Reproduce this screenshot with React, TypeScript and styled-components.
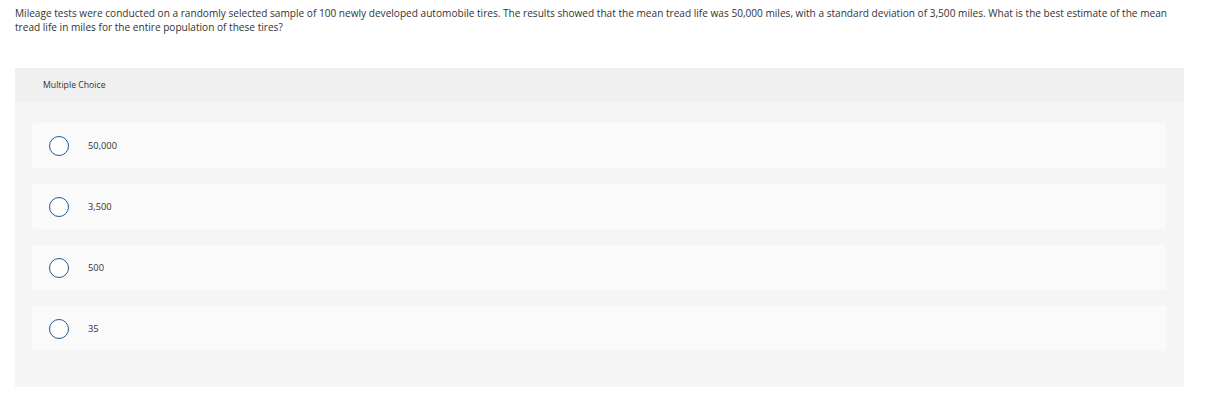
import React from "react";
import styled, { createGlobalStyle } from "styled-components";

const Global = createGlobalStyle`
  html, body { margin: 0; padding: 0; background: #fff; }
  body { font-family: "Open Sans", Lato, Arial, sans-serif; color: #333; }
`;

const Page = styled.div`
  padding: 6px 33px 20px 15px;
`;

const Question = styled.p`
  margin: 0;
  font-size: 10.1px;
  line-height: 14px;
  color: #333;
  max-width: 1160px;
`;

const Panel = styled.section`
  margin-top: 34px;
  background: #f5f5f5;
`;

const PanelHeader = styled.div`
  height: 34px;
  background: #f0f0f0;
  display: flex;
  align-items: center;
  padding-left: 28px;
  font-size: 8.7px;
  color: #333;
`;

const Options = styled.div`
  display: flex;
  flex-direction: column;
  gap: 16px;
  padding: 21px 18px 36px 17px;
`;

const Option = styled.label`
  height: 45px;
  background: #fafafa;
  border-radius: 2px;
  display: flex;
  align-items: center;
  padding-left: 17px;
  cursor: pointer;
`;

const Radio = styled.span`
  box-sizing: border-box;
  width: 20px;
  height: 20px;
  border-radius: 50%;
  border: 1.5px solid #1f5a96;
  background: #fff;
  flex: none;
`;

const OptionText = styled.span`
  margin-left: 19px;
  font-size: 9.3px;
  color: #333;
`;

const choices = ["50,000", "3,500", "500", "35"];

export default function App() {
  return (
    <>
      <Global />
      <Page>
        <Question>
          Mileage tests were conducted on a randomly selected sample of 100 newly developed automobile tires. The
          results showed that the mean tread life was 50,000 miles, with a standard deviation of 3,500 miles. What is
          the best estimate of the mean tread life in miles for the entire population of these tires?
        </Question>
        <Panel>
          <PanelHeader>Multiple Choice</PanelHeader>
          <Options>
            {choices.map((c) => (
              <Option key={c}>
                <Radio />
                <OptionText>{c}</OptionText>
              </Option>
            ))}
          </Options>
        </Panel>
      </Page>
    </>
  );
}
